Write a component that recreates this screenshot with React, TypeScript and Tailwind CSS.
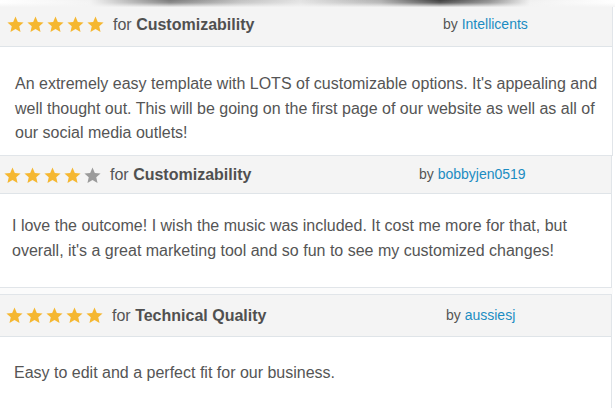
import React from "react";

const Star = ({ on }: { on: boolean }) => (
  <svg width="17" height="17" viewBox="0 0 24 24" className="block">
    <polygon
      points="12,0.8 15.3,8.3 23.4,9.1 17.3,14.5 19.1,22.6 12,18.4 4.9,22.6 6.7,14.5 0.6,9.1 8.7,8.3"
      fill={on ? "#f5b731" : "#9b9b9b"}
    />
  </svg>
);

const Stars = ({ n }: { n: number }) => (
  <div className="flex gap-[3px]">
    {[0, 1, 2, 3, 4].map((i) => (
      <Star key={i} on={i < n} />
    ))}
  </div>
);

export default function App() {
  return (
    <div
      className="relative w-[615px] h-[408px] overflow-hidden bg-white text-[#555555]"
      style={{ fontFamily: '"Liberation Sans", Arial, sans-serif' }}
    >
      {/* top shadow strip */}
      <div className="relative h-[7px] bg-[linear-gradient(to_right,#ffffff_0px,#f2f2f2_90px,#7a7a7a_170px,#c0c0c0_240px,#e2e2e2_300px,#b0b0b0_380px,#3e3e3e_440px,#909090_490px,#f0f0f0_530px,#ffffff_615px)]">
        <div className="absolute inset-0 bg-[linear-gradient(to_bottom,rgba(255,255,255,0)_0%,rgba(255,255,255,0.15)_40%,rgba(244,244,244,0.95)_100%)]" />
      </div>

      {/* Card 1 */}
      <div className="w-[613px] border-r border-b border-[#e1e5e9]">
        <div className="flex h-[40px] items-center border-b border-[#dfe4e8] bg-[#f4f4f4]">
          <div className="flex w-[443px] items-center pl-[7px] pb-[4px]">
            <Stars n={5} />
            <span className="ml-[9px] text-[16px]">
              for <b className="font-bold text-[#505050]">Customizability</b>
            </span>
          </div>
          <div className="pb-[4px] text-[14px]">
            by <span className="text-[#1b8cc2]">Intellicents</span>
          </div>
        </div>
        <div className="h-[108px] pl-[15px] pr-[10px] pt-[25px] text-[16px] leading-[24.5px]">
          An extremely easy template with LOTS of customizable options. It's appealing and
          well thought out. This will be going on the first page of our website as well as all
          of our social media outlets!
        </div>
      </div>

      {/* Card 2 */}
      <div className="w-[612px] border-r border-b border-[#e1e5e9]">
        <div className="flex h-[38px] items-center border-b border-[#dfe4e8] bg-[#f4f4f4]">
          <div className="flex w-[419px] items-center pl-[4px] pt-[1px]">
            <Stars n={4} />
            <span className="ml-[9px] text-[16px]">
              for <b className="font-bold text-[#505050]">Customizability</b>
            </span>
          </div>
          <div className="text-[14px]">
            by <span className="text-[#1b8cc2]">bobbyjen0519</span>
          </div>
        </div>
        <div className="h-[93px] pl-[12px] pr-[10px] pt-[20px] text-[16px] leading-[24.5px]">
          I love the outcome! I wish the music was included. It cost me more for that, but
          overall, it's a great marketing tool and so fun to see my customized changes!
        </div>
      </div>

      <div className="h-[6px] w-[613px] bg-[#fbfbfb]" />

      {/* Card 3 */}
      <div className="w-[612px] border-t border-r border-[#e1e5e9]">
        <div className="flex h-[42px] items-center border-b border-[#dfe4e8] bg-[#f4f4f4]">
          <div className="flex w-[446px] items-center pl-[6px]">
            <Stars n={5} />
            <span className="ml-[9px] text-[16px]">
              for <b className="font-bold text-[#505050]">Technical Quality</b>
            </span>
          </div>
          <div className="text-[14px]">
            by <span className="text-[#1b8cc2]">aussiesj</span>
          </div>
        </div>
        <div className="h-[80px] pl-[14px] pr-[10px] pt-[24px] text-[16px] leading-[24.5px]">
          Easy to edit and a perfect fit for our business.
        </div>
      </div>
    </div>
  );
}
